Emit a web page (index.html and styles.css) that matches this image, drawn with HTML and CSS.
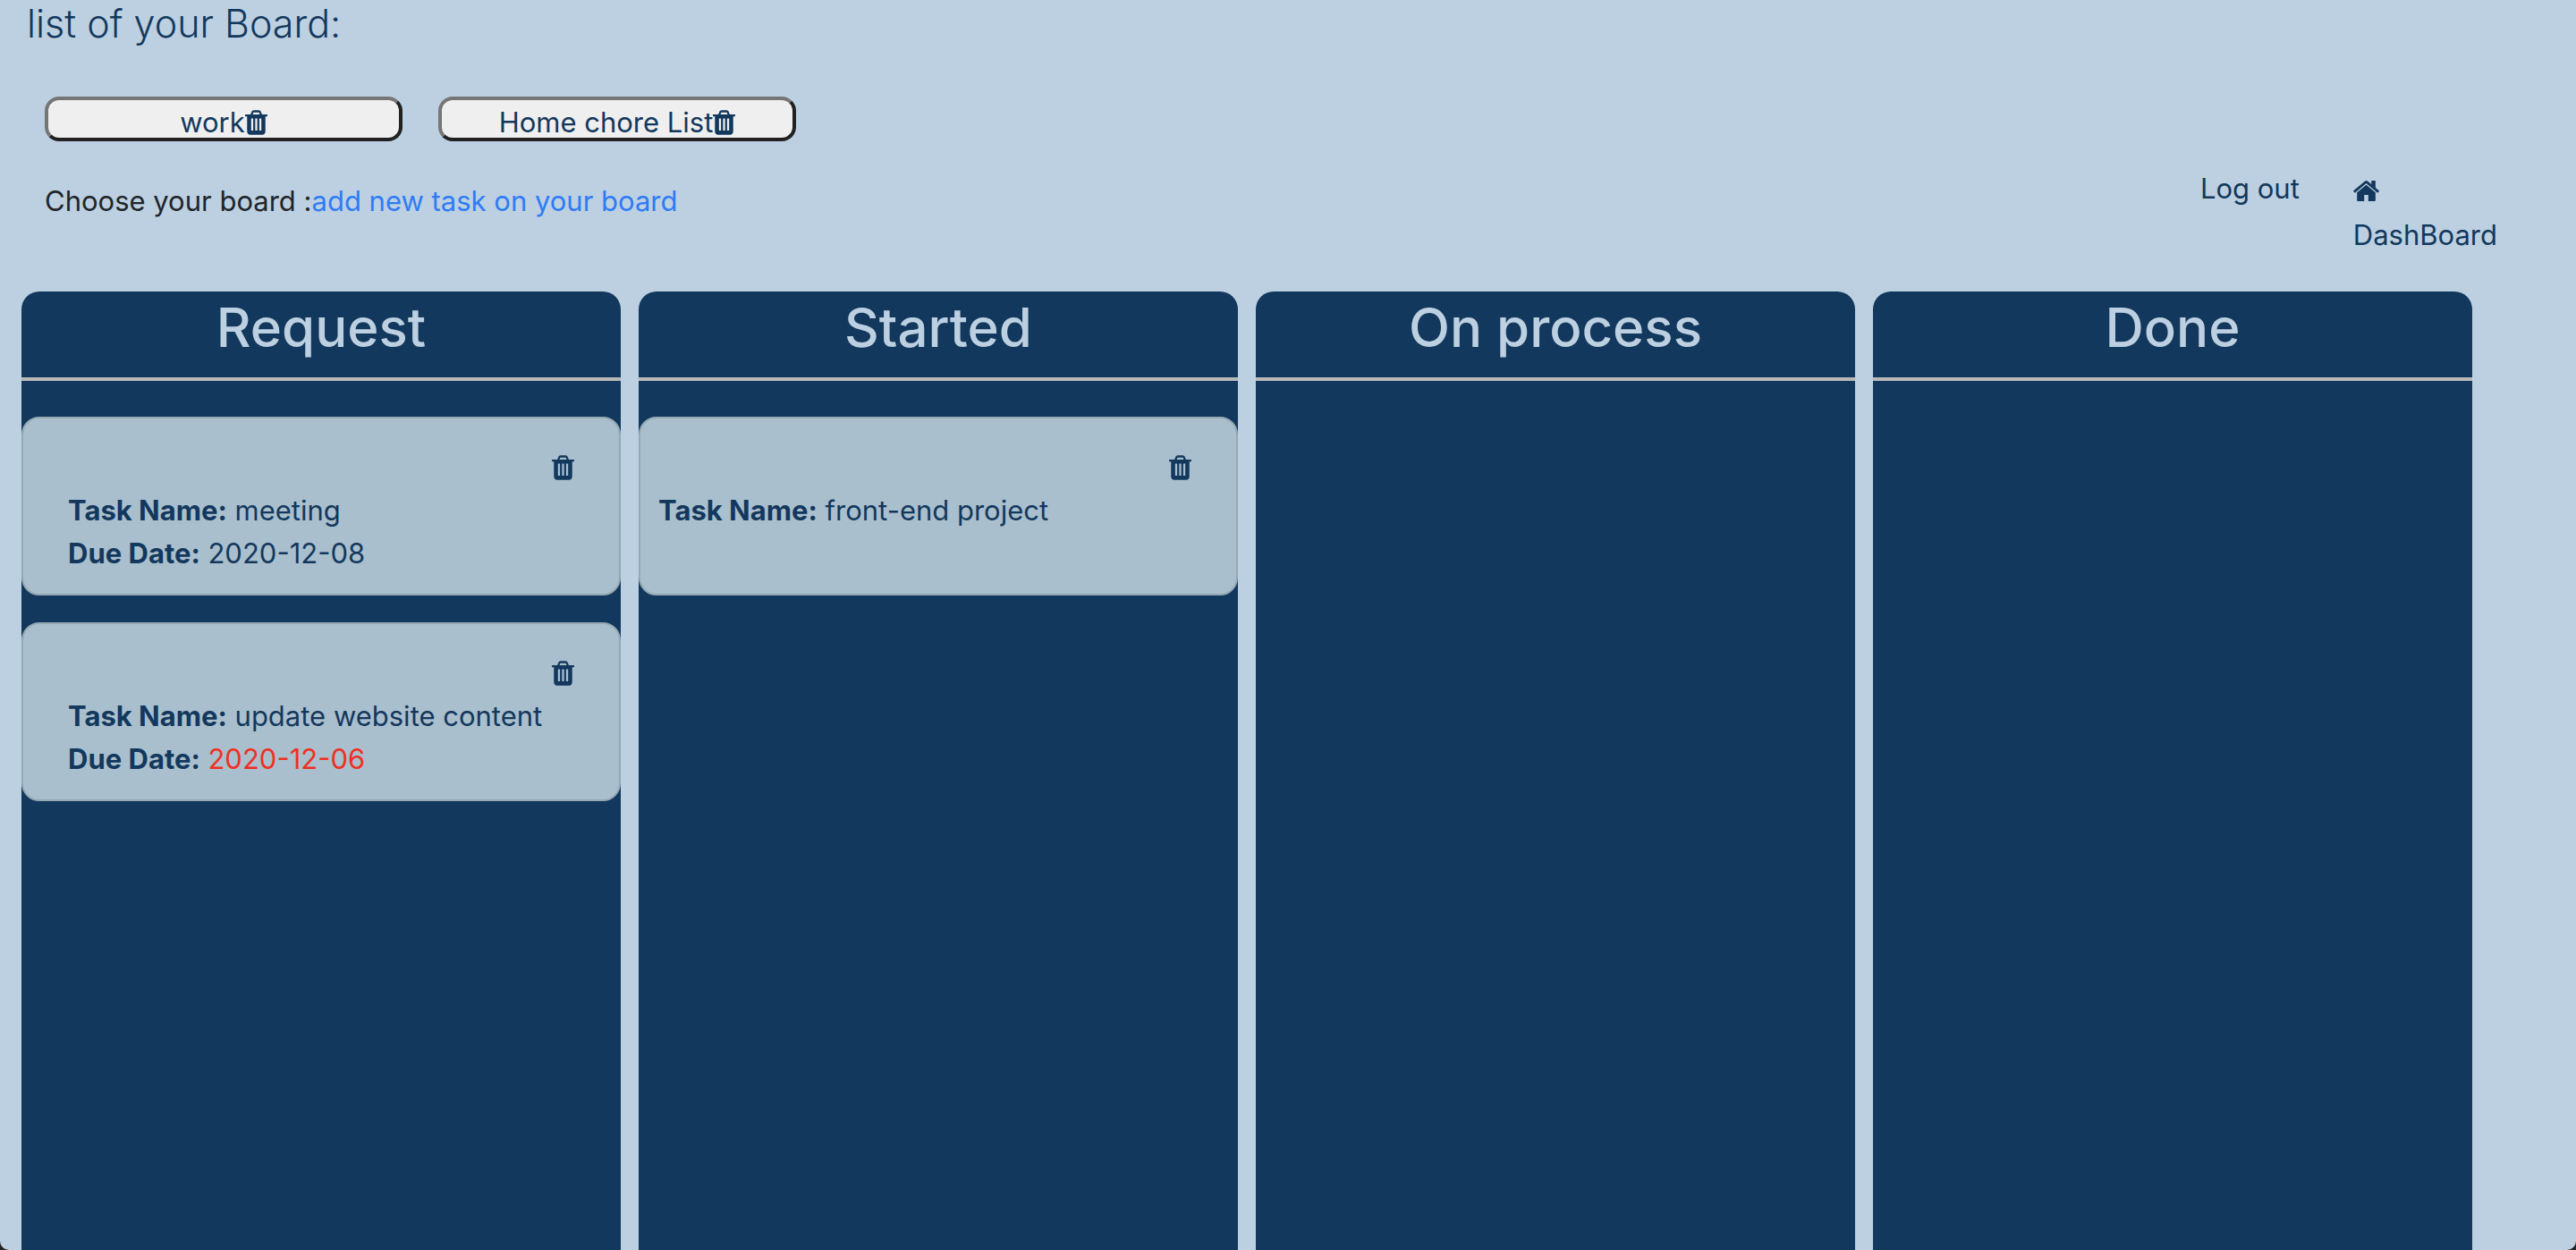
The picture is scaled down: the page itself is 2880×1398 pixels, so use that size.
FILE: index.html
```html
<!DOCTYPE html>
<html lang="en">
<head>
<meta charset="utf-8">
<title>Task board</title>
<link rel="stylesheet" href="styles.css">
</head>
<body>
<svg class="sprite" aria-hidden="true">
  <symbol id="trash" viewBox="192 128 1408 1536"><path d="M704 1376v-704q0-14-9-23t-23-9h-64q-14 0-23 9t-9 23v704q0 14 9 23t23 9h64q14 0 23-9t9-23zm256 0v-704q0-14-9-23t-23-9h-64q-14 0-23 9t-9 23v704q0 14 9 23t23 9h64q14 0 23-9t9-23zm256 0v-704q0-14-9-23t-23-9h-64q-14 0-23 9t-9 23v704q0 14 9 23t23 9h64q14 0 23-9t9-23zm-544-992h448l-48-117q-7-9-17-11h-317q-10 2-17 11zm928 32v64q0 14-9 23t-23 9h-96v948q0 83-47 143.5t-113 60.5h-832q-66 0-113-58.5t-47-141.5v-952h-96q-14 0-23-9t-9-23v-64q0-14 9-23t23-9h309l70-167q15-37 54-63t79-26h320q40 0 79 26t54 63l70 167h309q14 0 23 9t9 23z"/></symbol>
  <symbol id="home" viewBox="89 253 1614 1283"><path d="M1472 992v480q0 26-19 45t-45 19h-384v-384h-256v384h-384q-26 0-45-19t-19-45v-480q0-1 .5-3t.5-3l575-474 575 474q1 2 1 6zm223-69l-62 74q-8 9-21 11h-3q-13 0-21-7l-692-577-692 577q-12 8-24 7-13-2-21-11l-62-74q-8-10-7-23.5t11-21.5l719-599q32-26 76-26t76 26l244 204v-195q0-14 9-23t23-9h192q14 0 23 9t9 23v408l219 182q10 8 11 21.5t-7 23.5z"/></symbol>
</svg>
<header class="top">
  <h1 class="title">list of your Board:</h1>
  <div class="boards">
    <button class="board-button" type="button">work<svg class="trash"><use href="#trash"/></svg></button>
    <button class="board-button" type="button">Home chore List<svg class="trash"><use href="#trash"/></svg></button>
  </div>
  <div class="bar">
    <p class="choose">Choose your board :<a class="add-link" href="#new-task">add new task on your board</a></p>
    <nav class="nav">
      <a class="nav-link" href="#logout">Log out</a>
      <a class="nav-link dashboard" href="#dashboard"><svg class="home"><use href="#home"/></svg>DashBoard</a>
    </nav>
  </div>
</header>
<main class="columns">
  <section class="column">
    <h2 class="column-title">Request</h2>
    <div class="cards">
      <article class="card">
        <button class="delete" type="button" aria-label="Delete task"><svg class="trash"><use href="#trash"/></svg></button>
        <p class="line"><strong>Task Name:</strong> meeting</p>
        <p class="line"><strong>Due Date:</strong> 2020-12-08</p>
      </article>
      <article class="card">
        <button class="delete" type="button" aria-label="Delete task"><svg class="trash"><use href="#trash"/></svg></button>
        <p class="line"><strong>Task Name:</strong> update website content</p>
        <p class="line"><strong>Due Date:</strong> <span class="overdue">2020-12-06</span></p>
      </article>
    </div>
  </section>
  <section class="column">
    <h2 class="column-title">Started</h2>
    <div class="cards">
      <article class="card card-wide">
        <button class="delete" type="button" aria-label="Delete task"><svg class="trash"><use href="#trash"/></svg></button>
        <p class="line"><strong>Task Name:</strong> front-end project</p>
      </article>
    </div>
  </section>
  <section class="column">
    <h2 class="column-title">On process</h2>
  </section>
  <section class="column">
    <h2 class="column-title">Done</h2>
  </section>
</main>
</body>
</html>
```
FILE: styles.css
```css
* {
  box-sizing: border-box;
}

html {
  background: #222;
}

body {
  display: flex;
  flex-direction: column;
  min-height: 100vh;
  margin: 0;
  overflow-x: hidden;
  border-radius: 0 0 10px 10px;
  background: #bcd0e1;
  color: #13385d;
  font: 31px/48px Inter, "Liberation Sans", sans-serif;
}

h1, h2, p {
  margin: 0;
}

a {
  color: inherit;
  text-decoration: none;
}

svg {
  fill: currentColor;
}

.sprite {
  position: absolute;
  width: 0;
  height: 0;
}

.trash {
  width: 25px;
  height: 28px;
}

.home {
  width: 29px;
  height: 23px;
}

.title {
  padding-left: 30px;
  font-size: 43px;
  font-weight: 300;
  line-height: 52px;
}

.boards {
  display: flex;
  gap: 40px;
  padding: 56px 50px 0;
}

.board-button {
  display: flex;
  align-items: center;
  justify-content: center;
  width: 400px;
  height: 50px;
  padding: 8px 0 0;
  border: 4px solid;
  border-color: #767676 #212121 #212121 #767676;
  border-radius: 16px;
  background: #efefef;
  color: inherit;
  font: inherit;
  line-height: 32px;
}

.bar {
  display: flex;
  justify-content: space-between;
  padding: 27px 88px 0 50px;
}

.choose {
  padding-top: 16px;
  color: #212529;
}

.add-link {
  color: #2f7cf6;
}

.nav {
  display: flex;
  gap: 60px;
  height: 141px;
  line-height: 52px;
}

.dashboard {
  display: flex;
  flex-direction: column;
}

.dashboard .home {
  margin: 17px 0 12px;
}

.columns {
  display: grid;
  flex: 1;
  grid-template-columns: repeat(4, 1fr);
  gap: 20px;
  padding: 0 116px 0 24px;
}

.column {
  border-radius: 20px 20px 0 0;
  background: #13385d;
}

.column-title {
  height: 100px;
  border-bottom: 4px solid #b8b8b8;
  color: #bcd0e1;
  font-size: 60px;
  font-weight: 500;
  line-height: 80px;
  text-align: center;
}

.cards {
  display: flex;
  flex-direction: column;
  gap: 30px;
  padding-top: 40px;
}

.card {
  display: flex;
  flex-direction: column;
  min-height: 200px;
  padding: 31px 50px 20px;
  border: 2px solid #95a9b3;
  border-radius: 20px;
  background: #aabfcd;
}

.card-wide {
  padding-left: 20px;
}

.delete {
  display: flex;
  align-items: center;
  align-self: flex-end;
  height: 48px;
  padding: 0;
  border: 0;
  background: none;
  color: inherit;
}

.overdue {
  color: #ee3124;
}
```
